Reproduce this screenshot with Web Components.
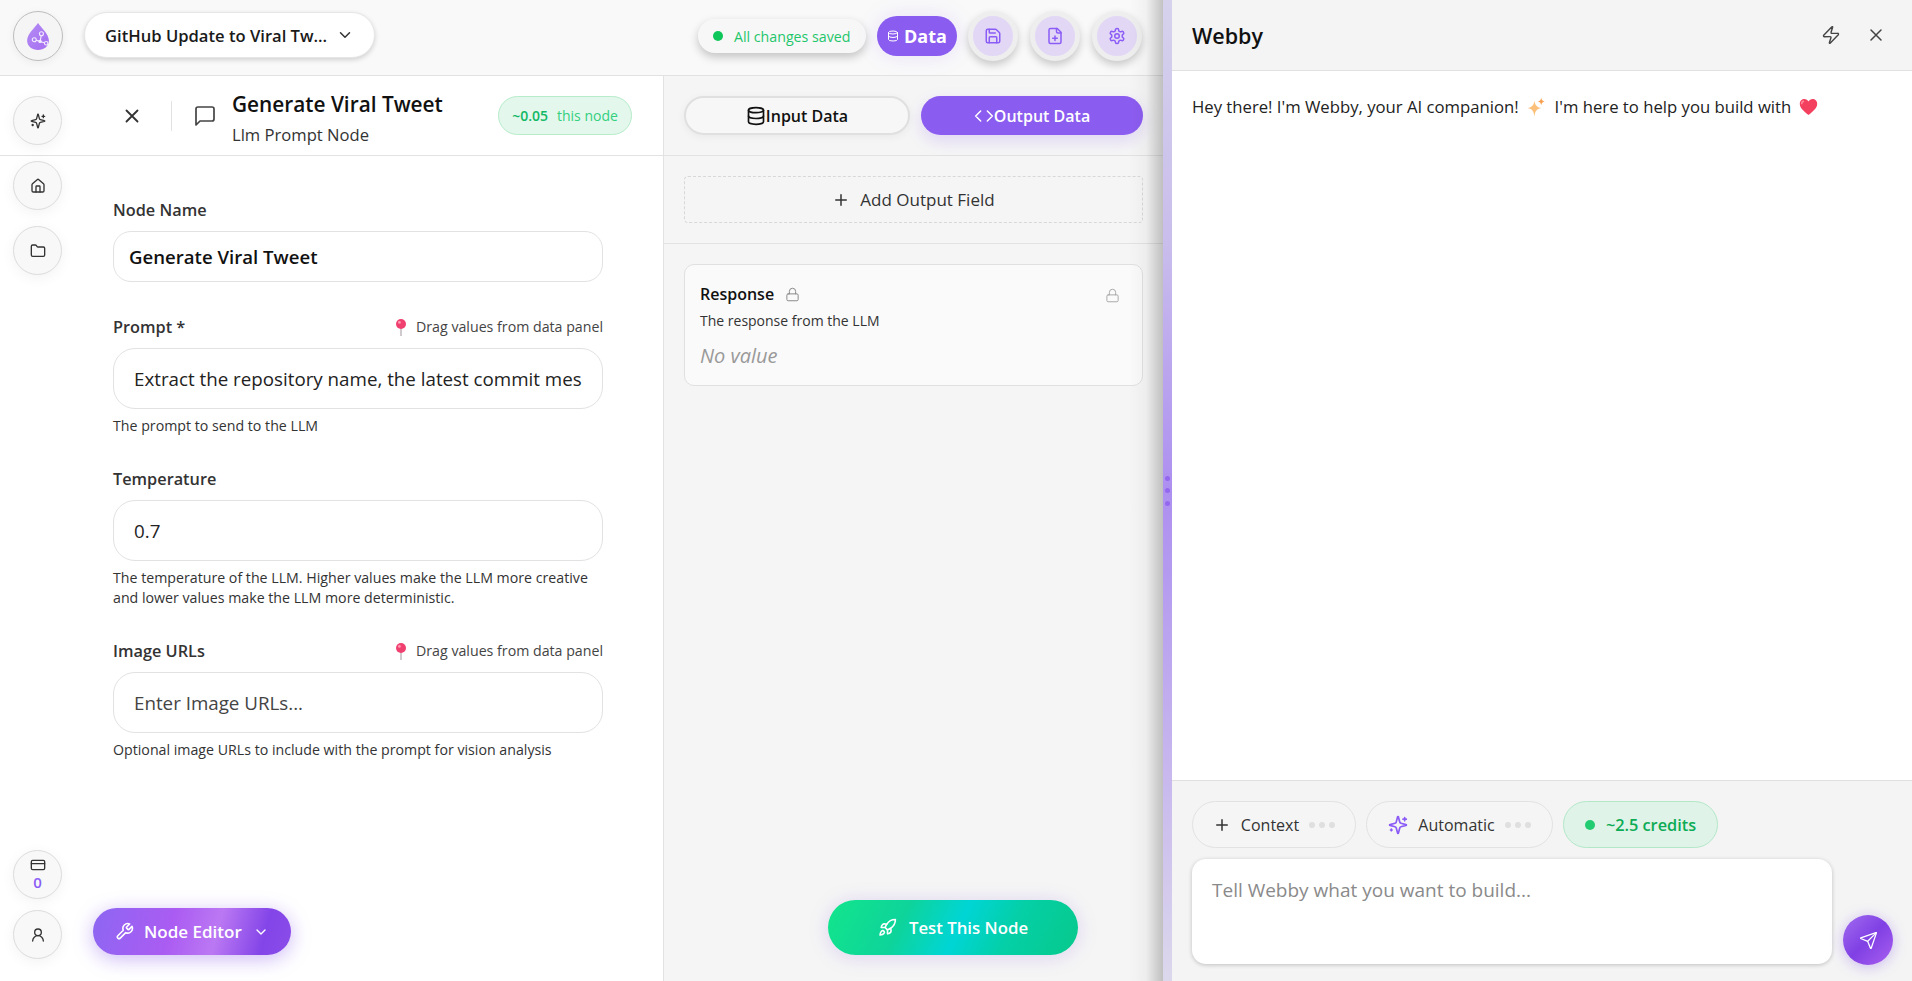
<!doctype html>
<html>
<head>
<meta charset="utf-8">
<title>Webby</title>
<style>
html, body { margin: 0; height: 100%; overflow: hidden; }
body { font-family: "Open Sans", "Liberation Sans", sans-serif; color: #111; background: #fff; }
</style>
</head>
<body>
<app-shell></app-shell>
<script>
// lucide style icons, stroke only
const icons = {
  chevron: '<path d="m6 9 6 6 6-6"/>',
  x: '<path d="M18 6 6 18M6 6l12 12"/>',
  plus: '<path d="M5 12h14M12 5v14"/>',
  msg: '<path d="M21 15a2 2 0 0 1-2 2H7l-4 4V5a2 2 0 0 1 2-2h14a2 2 0 0 1 2 2z"/>',
  db: '<ellipse cx="12" cy="5" rx="9" ry="3"/><path d="M3 5v14a9 3 0 0 0 18 0V5"/><path d="M3 12a9 3 0 0 0 18 0"/>',
  code: '<path d="m8 6-6 6 6 6M16 6l6 6-6 6"/>',
  save: '<path d="M15.2 3a2 2 0 0 1 1.4.6l3.8 3.8a2 2 0 0 1 .6 1.4V19a2 2 0 0 1-2 2H5a2 2 0 0 1-2-2V5a2 2 0 0 1 2-2z"/><path d="M17 21v-7a1 1 0 0 0-1-1H8a1 1 0 0 0-1 1v7"/><path d="M7 3v4a1 1 0 0 0 1 1h7"/>',
  file: '<path d="M15 2H6a2 2 0 0 0-2 2v16a2 2 0 0 0 2 2h12a2 2 0 0 0 2-2V7z"/><path d="M14 2v4a2 2 0 0 0 2 2h4"/><path d="M9 15h6M12 18v-6"/>',
  gear: '<path d="M12.22 2h-.44a2 2 0 0 0-2 2v.18a2 2 0 0 1-1 1.73l-.43.25a2 2 0 0 1-2 0l-.15-.08a2 2 0 0 0-2.73.73l-.22.38a2 2 0 0 0 .73 2.73l.15.1a2 2 0 0 1 1 1.72v.51a2 2 0 0 1-1 1.74l-.15.09a2 2 0 0 0-.73 2.73l.22.38a2 2 0 0 0 2.73.73l.15-.08a2 2 0 0 1 2 0l.43.25a2 2 0 0 1 1 1.73V20a2 2 0 0 0 2 2h.44a2 2 0 0 0 2-2v-.18a2 2 0 0 1 1-1.73l.43-.25a2 2 0 0 1 2 0l.15.08a2 2 0 0 0 2.73-.73l.22-.39a2 2 0 0 0-.73-2.73l-.15-.08a2 2 0 0 1-1-1.74v-.5a2 2 0 0 1 1-1.74l.15-.09a2 2 0 0 0 .73-2.73l-.22-.38a2 2 0 0 0-2.73-.73l-.15.08a2 2 0 0 1-2 0l-.43-.25a2 2 0 0 1-1-1.73V4a2 2 0 0 0-2-2z"/><circle cx="12" cy="12" r="3"/>',
  sparkles: '<path d="M9.9 15.5A2 2 0 0 0 8.5 14.1L2.4 12.5a.5.5 0 0 1 0-1l6.1-1.6A2 2 0 0 0 9.9 8.5l1.6-6.1a.5.5 0 0 1 1 0l1.6 6.1a2 2 0 0 0 1.4 1.4l6.1 1.6a.5.5 0 0 1 0 1l-6.1 1.6a2 2 0 0 0-1.4 1.4l-1.6 6.1a.5.5 0 0 1-1 0z"/><path d="M20 3v4M22 5h-4M4 17v2M5 18H3"/>',
  home: '<path d="M15 21v-8a1 1 0 0 0-1-1h-4a1 1 0 0 0-1 1v8"/><path d="M3 10a2 2 0 0 1 .7-1.5l7-6a2 2 0 0 1 2.6 0l7 6a2 2 0 0 1 .7 1.5v9a2 2 0 0 1-2 2H5a2 2 0 0 1-2-2z"/>',
  folder: '<path d="M20 20a2 2 0 0 0 2-2V8a2 2 0 0 0-2-2h-7.9a2 2 0 0 1-1.7-.9l-.8-1.2A2 2 0 0 0 7.9 3H4a2 2 0 0 0-2 2v13a2 2 0 0 0 2 2z"/>',
  card: '<rect width="20" height="14" x="2" y="5" rx="2"/><path d="M2 10h20"/>',
  user: '<circle cx="12" cy="8" r="5"/><path d="M20 21a8 8 0 0 0-16 0"/>',
  wrench: '<path d="M14.7 6.3a1 1 0 0 0 0 1.4l1.6 1.6a1 1 0 0 0 1.4 0l3.77-3.77a6 6 0 0 1-7.94 7.94l-6.91 6.91a2.12 2.12 0 0 1-3-3l6.91-6.91a6 6 0 0 1 7.94-7.94l-3.76 3.76z"/>',
  rocket: '<path d="M4.5 16.5c-1.5 1.26-2 5-2 5s3.74-.5 5-2c.71-.84.7-2.13-.09-2.91a2.18 2.18 0 0 0-2.91-.09z"/><path d="m12 15-3-3a22 22 0 0 1 2-3.95A12.88 12.88 0 0 1 22 2c0 2.72-.78 7.5-6 11a22.35 22.35 0 0 1-4 2z"/><path d="M9 12H4s.55-3.03 2-4c1.62-1.08 5 0 5 0M12 15v5s3.03-.55 4-2c1.08-1.62 0-5 0-5"/>',
  lock: '<rect width="18" height="11" x="3" y="11" rx="2"/><path d="M7 11V7a5 5 0 0 1 10 0v4"/>',
  bolt: '<path d="M4 14a1 1 0 0 1-.78-1.63l9.9-10.2a.5.5 0 0 1 .86.46l-1.92 6.02A1 1 0 0 0 13 10h7a1 1 0 0 1 .78 1.63l-9.9 10.2a.5.5 0 0 1-.86-.46l1.92-6.02A1 1 0 0 0 11 14z"/>',
  send: '<path d="M14.5 21.7a.5.5 0 0 0 .9 0l6.5-19a.5.5 0 0 0-.6-.6l-19 6.5a.5.5 0 0 0 0 .9l7.9 3.2a2 2 0 0 1 1.1 1.1z"/><path d="m21.9 2.1-10.9 10.9"/>',
}
const icon = (name, size = 18, sw = 2) =>
  `<svg width="${size}" height="${size}" viewBox="0 0 24 24" fill="none" stroke="currentColor" stroke-width="${sw}" stroke-linecap="round" stroke-linejoin="round" style="flex:none;display:block">${icons[name]}</svg>`

const pin = `<svg width="14" height="18" viewBox="0 0 14 18" style="flex:none;display:block"><rect x="6.3" y="9" width="1.4" height="9" fill="#b9b4b8"/><circle cx="7" cy="6" r="5" fill="#f0406f"/><circle cx="5.4" cy="4.4" r="1.4" fill="#ff9ab4"/></svg>`
const sparkle = `<svg width="20" height="21" viewBox="0 0 18 20" style="display:block;margin-right:2px"><path d="M7.500 3.500c.8 4.500 2.200 6 6.500 7-4.300 1-5.700 2.500-6.500 8-.8-5.500-2.200-7-6.500-8 4.300-1 5.700-2.500 6.500-7z" fill="#fbc07a"/><path d="M14 .8c.4 2.200 1.100 3 3.200 3.500-2.100.5-2.800 1.300-3.200 3.500-.4-2.200-1.100-3-3.200-3.500 2.100-.5 2.800-1.300 3.200-3.500z" fill="#f9a050"/></svg>`
const heart = `<svg width="19" height="18" viewBox="0 0 19 18" style="display:block;margin-left:1px"><path d="M9.500 17C3 12 .8 9.200.8 5.800.8 3 3 1 5.400 1c1.800 0 3.200.9 4.100 2.500C10.400 1.900 11.800 1 13.600 1c2.400 0 4.600 2 4.600 4.800C18.200 9.200 16 12 9.500 17z" fill="#f4405f"/><path d="M5 3c-1.500.4-2.400 1.600-2.400 3.200" stroke="#ff8a9c" stroke-width="1.400" fill="none"/></svg>`

class Comp extends HTMLElement {
  connectedCallback() {
    if (this.shadowRoot) return
    this.attachShadow({ mode: "open" }).innerHTML = this.render()
  }
  attr(n, d = "") {
    return this.hasAttribute(n) ? this.getAttribute(n) : d
  }
}

class RoundBtn extends Comp {
  render() {
    return `<style>
:host { display: flex; width: 49px; height: 49px; border-radius: 50%; border: 1px solid #dcdcdc; box-sizing: border-box; background: #f8f8f8; color: #333; align-items: center; justify-content: center; flex-direction: column; box-shadow: 0 3px 14px rgba(0,0,0,.05); }
b { font-size: 15px; font-weight: 600; color: #8b5cf6; line-height: 19px; }
</style>${icon(this.attr("icon"), +this.attr("size", 16))}${this.hasAttribute("count") ? `<b>${this.attr("count")}</b>` : ""}`
  }
}

class ActionBtn extends Comp {
  render() {
    return `<style>
:host { display: flex; width: 50px; height: 50px; box-sizing: border-box; border-radius: 50%; border: 5px solid #eeeeee; background: #e2d8f6; color: #8b5cf6; align-items: center; justify-content: center; box-shadow: 0 4px 8px rgba(0,0,0,.2); }
</style>${icon(this.attr("icon"), 18)}`
  }
}

class TopBar extends Comp {
  render() {
    return `<style>
:host { display: flex; align-items: center; height: 72px; box-sizing: content-box; border-bottom: 1px solid #e2e2e2; background: #f9f9f9; padding: 0 21px 3px 13px; }
.logo { width: 50px; height: 50px; box-sizing: border-box; border: 1px solid #bdbdbd; border-radius: 50%; background: #f5f5f5; display: flex; align-items: center; justify-content: center; box-shadow: 0 2px 8px rgba(0,0,0,.06); }
.proj { margin: -2px 0 0 21px; width: 291px; height: 46px; box-sizing: border-box; border-radius: 23px; background: #fff; border: 1px solid #e6e6e6; box-shadow: 0 2px 5px rgba(0,0,0,.16); display: flex; align-items: center; padding: 0 20px 0 20px; justify-content: space-between; font-size: 16.6px; font-weight: 600; color: #1a1a1a; white-space: nowrap; }
.proj svg { color: #333; }
.right { margin-left: auto; display: flex; align-items: center; gap: 11px; }
.saved { width: 168px; height: 34px; border-radius: 17px; background: #f7f7f7; box-shadow: 0 4px 10px rgba(0,0,0,.22); display: flex; align-items: center; box-sizing: border-box; padding-left: 15px; gap: 11px; font-size: 14.2px; color: #1fc66b; white-space: nowrap; }
.saved i { width: 10px; height: 10px; border-radius: 50%; background: #0ec65a; }
.data { width: 80px; height: 40px; border-radius: 20px; background: #8b5cf0; color: #fff; display: flex; align-items: center; justify-content: center; gap: 5px; font-size: 18px; font-weight: 700; box-shadow: 0 0 22px rgba(139,92,246,.15); }
</style>
<div class="logo"><svg width="24" height="29" viewBox="0 0 26 32"><defs><linearGradient id="g" x1="0" y1="0" x2="1" y2="1"><stop offset="0" stop-color="#b48cf5"/><stop offset="1" stop-color="#a56ef0"/></linearGradient></defs><path d="M13 1C9 7 1 13 1 20.500 1 27 6.500 31 13 31s12-4 12-10.500C25 13 17 7 13 1z" fill="url(#g)"/><g stroke="#f3ecff" stroke-width="1.200" fill="none"><path d="M10.900 20.100 15.300 21.400 16.500 15.400M15.300 21.400 20 23"/><circle cx="8.900" cy="19.600" r="2.200"/><circle cx="16.800" cy="13" r="2.200"/><circle cx="22" cy="23.500" r="1.900"/><circle cx="15.300" cy="21.400" r="1.300" fill="#f3ecff"/></g></svg></div>
<div class="proj"><span>GitHub Update to Viral Tw...</span>${icon("chevron", 18)}</div>
<div class="right">
  <div class="saved"><i></i><span>All changes saved</span></div>
  <div class="data">${icon("db", 12)}<span>Data</span></div>
  <action-btn icon="save"></action-btn>
  <action-btn icon="file" style="margin-left:1px"></action-btn>
  <action-btn icon="gear" style="margin-left:1px"></action-btn>
</div>`
  }
}

class SideRail extends Comp {
  render() {
    return `<style>
:host { display: flex; flex-direction: column; justify-content: space-between; width: 75px; flex: none; box-sizing: border-box; padding: 20px 0 22px 13px; }
div { display: flex; flex-direction: column; }
.top { gap: 16px; }
.bot { gap: 11px; }
</style>
<div class="top"><round-btn icon="sparkles"></round-btn><round-btn icon="home"></round-btn><round-btn icon="folder"></round-btn></div>
<div class="bot"><round-btn icon="card" count="0"></round-btn><round-btn icon="user"></round-btn></div>`
  }
}

class NodeHeader extends Comp {
  render() {
    return `<style>
:host { display: flex; align-items: center; height: 79px; border-bottom: 1px solid #e2e2e2; box-sizing: content-box; padding-left: 121px; }
.sep { width: 1px; height: 30px; background: #e2e2e2; margin: 0 21px 0 28px; }
.msg { color: #444; margin-right: 15px; }
.txt { padding-top: 5px; }
.t { font-size: 20.8px; font-weight: 600; line-height: 27px; color: #111; white-space: nowrap; }
.s { font-size: 16.6px; line-height: 22px; margin-top: 6px; color: #333; white-space: nowrap; }
.cost { margin-left: auto; margin-right: 31px; width: 134px; height: 39px; box-sizing: border-box; border-radius: 20px; border: 1px solid #b6ecca; background: #e3f7ec; display: flex; align-items: center; justify-content: center; gap: 9px; font-size: 14px; color: #32d07f; white-space: nowrap; }
.cost b { color: #11b864; font-weight: 600; }
</style>
<span style="color:#333">${icon("x", 22)}</span><div class="sep"></div>
<span class="msg">${icon("msg", 24, 1.7)}</span>
<div class="txt"><div class="t">Generate Viral Tweet</div><div class="s">Llm Prompt Node</div></div>
<div class="cost"><b>~0.05</b><span>this node</span></div>`
  }
}

class FormField extends Comp {
  render() {
    const drag = this.hasAttribute("drag")
      ? `<span class="drag">${pin}<span>Drag values from data panel</span></span>`
      : ""
    const hint = this.attr("hint")
    return `<style>
:host { display: block; margin-bottom: 29px; }
.l { display: flex; justify-content: space-between; align-items: center; height: 27px; margin-bottom: 8px; }
.n { font-size: 16.3px; font-weight: 600; color: #333; }
.drag { display: flex; align-items: center; gap: 8px; font-size: 14.2px; color: #444; }
.box { height: 61px; box-sizing: border-box; border: 1px solid #e2e2e2; border-radius: 22px; display: flex; align-items: center; padding: 0 0 0 20px; font-size: 18.75px; white-space: nowrap; overflow: hidden; color: #222; background: #fff; }
.box.bold { font-weight: 600; padding-left: 15px; color: #111; height: 51px; border-radius: 18px; font-size: 18.6px; }
.box.ph { color: #444; }
.h { font-size: 14.2px; line-height: 20px; color: #333; margin-top: 7px; }
</style>
<div class="l"><span class="n">${this.attr("label")}</span>${drag}</div>
<div class="box ${this.attr("kind")}"><slot></slot></div>
${hint ? `<div class="h">${hint}</div>` : ""}`
  }
}

class NodeEditor extends Comp {
  render() {
    return `<style>
:host { display: flex; flex-direction: column; flex: none; width: 664px; box-sizing: border-box; border-right: 1px solid #e2e2e2; background: #fff; position: relative; min-height: 0; }
.form { width: 490px; margin-left: 113px; padding-top: 40px; }
.fab { position: absolute; left: 93px; top: 832px; width: 198px; height: 47px; border-radius: 24px; background: linear-gradient(105deg, #8d66f2 0%, #ab5cf2 40%, #bb78f3 62%, #8345e8 85%, #8a4ce8 100%); color: #fff; display: flex; align-items: center; gap: 10px; box-sizing: border-box; padding-left: 22px; font-size: 17px; font-weight: 600; box-shadow: 0 4px 20px rgba(130,80,235,.4); white-space: nowrap; }
.fab .c { margin-left: 1px; }
</style>
<node-header></node-header>
<div class="form"><slot></slot></div>
<div class="fab">${icon("wrench", 19)}<span>Node Editor</span><span class="c">${icon("chevron", 16)}</span></div>`
  }
}

class TabBtn extends Comp {
  render() {
    const on = this.hasAttribute("on")
    return `<style>
:host { display: flex; flex: 1; height: 39px; box-sizing: border-box; border-radius: 20px; align-items: center; justify-content: center; font-size: 16px; font-weight: 600; white-space: nowrap;
  ${on ? "background:#8b5cf0;color:#fff;box-shadow:0 6px 16px rgba(139,92,246,.2);" : "background:#f7f7f7;color:#111;border:2px solid #e0e0e0;box-shadow:0 2px 8px rgba(0,0,0,.05);"} }
</style>${icon(this.attr("icon"), 20, on ? 1.8 : 2)}<span><slot></slot></span>`
  }
}

class OutputCard extends Comp {
  render() {
    return `<style>
:host { display: block; position: relative; height: 122px; box-sizing: border-box; border: 1px solid #e0e0e0; border-radius: 10px; background: #fafafa; padding: 18px 15px; }
.n { display: flex; align-items: center; gap: 11px; font-size: 16px; font-weight: 600; line-height: 22px; color: #111; }
.n span { color: #8a8a8a; }
.d { font-size: 14px; line-height: 19px; margin-top: 6px; color: #333; }
.v { font-size: 20px; font-style: italic; color: #999; margin-top: 13px; line-height: 25px; }
.corner { position: absolute; right: 22px; top: 23px; color: #aaa; }
</style>
<div class="n">Response <span>${icon("lock", 15, 1.6)}</span></div>
<div class="d">The response from the LLM</div>
<div class="v">No value</div>
<span class="corner">${icon("lock", 15, 1.6)}</span>`
  }
}

class DataPanel extends Comp {
  render() {
    return `<style>
:host { display: flex; flex-direction: column; flex: 1; min-width: 0; background: #f5f5f5; position: relative; overflow: hidden; }
.tabs { display: flex; gap: 11px; height: 79px; align-items: center; padding: 0 20px; border-bottom: 1px solid #e2e2e2; }
.add { padding: 20px; border-bottom: 1px solid #e2e2e2; }
.dash { height: 47px; box-sizing: border-box; border: 1px dashed #d8d8d8; border-radius: 4px; display: flex; align-items: center; justify-content: center; gap: 10px; font-size: 17px; color: #333; }
.cards { padding: 20px 20px 0; }
.test { position: absolute; left: 164px; top: 824px; width: 250px; height: 55px; border-radius: 28px; background: linear-gradient(115deg, #12e58c 0%, #0ed49a 30%, #00d5d5 52%, #04cfa6 72%, #07c98b 100%); color: #fff; display: flex; align-items: center; justify-content: center; gap: 12px; font-size: 16.8px; font-weight: 600; box-shadow: 0 2px 20px rgba(130,90,230,.22); white-space: nowrap; }
</style>
<div class="tabs"><tab-btn icon="db">Input Data</tab-btn><tab-btn icon="code" on>Output Data</tab-btn></div>
<div class="add"><div class="dash">${icon("plus", 18)}<span>Add Output Field</span></div></div>
<div class="cards"><output-card></output-card></div>
<div class="test">${icon("rocket", 19)}<span>Test This Node</span></div>`
  }
}

class ChatChip extends Comp {
  render() {
    const green = this.hasAttribute("green")
    const dots = green ? "" : `<span class="dots"><i></i><i></i><i></i></span>`
    const lead = green ? `<b class="dot"></b>` : `<span class="ic">${icon(this.attr("icon"), +this.attr("size", 18))}</span>`
    return `<style>
:host { display: flex; height: 47px; box-sizing: border-box; border-radius: 24px; align-items: center; justify-content: center; gap: 10px; font-size: 16px; white-space: nowrap; border: 1px solid ${green ? "#b2e8c8" : "#e2e2e2"}; background: ${green ? "#e0f3e8" : "#f5f5f5"}; color: ${green ? "#0cab55" : "#333"}; font-weight: ${green ? 600 : 400}; }
:host([green]) { font-size: 16.3px; }
.ic { color: ${this.attr("tint", "#333")}; }
.dot { width: 10px; height: 10px; border-radius: 50%; background: #22cc70; margin-right: 1px; }
.dots { display: flex; gap: 4px; }
.dots i { width: 6px; height: 6px; border-radius: 50%; background: #dfdfdf; }
</style>${lead}<span><slot></slot></span>${dots}`
  }
}

class ChatPanel extends Comp {
  render() {
    return `<style>
:host { display: flex; flex-direction: column; width: 740px; flex: none; background: #fff; color: #222; }
header { height: 71px; box-sizing: border-box; display: flex; align-items: center; padding: 0 26px 0 20px; background: #f4f4f4; border-bottom: 1px solid #e0e0e0; font-size: 21.5px; font-weight: 600; color: #111; gap: 25px; flex: none; }
header .sp { flex: 1; }
header svg { color: #444; }
.msgs { flex: 1; padding: 25px 20px; font-size: 16.7px; line-height: 22px; display: flex; align-items: center; align-content: flex-start; flex-wrap: wrap; gap: 7px; color: #222; }
footer { flex: none; height: 201px; box-sizing: border-box; background: #f4f4f4; border-top: 1px solid #e0e0e0; padding: 20px 19px 0 20px; }
.chips { display: flex; gap: 10px; }
.inp { display: flex; margin-top: 11px; align-items: flex-end; gap: 11px; }
.ta { width: 640px; height: 105px; box-sizing: border-box; background: #fff; border-radius: 14px; box-shadow: 0 1px 4px rgba(0,0,0,.22); padding: 18px 20px; font-size: 19px; color: #8a8a8a; }
.send { width: 50px; height: 50px; border-radius: 50%; background: linear-gradient(135deg, #a26cf0, #8040e4 50%, #aa60f0); color: #fff; display: flex; align-items: center; justify-content: center; box-shadow: 0 2px 14px rgba(130,80,235,.35); flex: none; margin-bottom: -1px; }
</style>
<header><span>Webby</span><span class="sp"></span>${icon("bolt", 20, 1.7)}${icon("x", 20, 1.8)}</header>
<div class="msgs"><span>Hey there! I'm Webby, your AI companion!</span>${sparkle}<span>I'm here to help you build with</span>${heart}</div>
<footer>
  <div class="chips">
    <chat-chip icon="plus" style="width:164px">Context</chat-chip>
    <chat-chip icon="sparkles" size="20" tint="#8b5cf6" style="width:187px">Automatic</chat-chip>
    <chat-chip green style="width:155px">~2.5 credits</chat-chip>
  </div>
  <div class="inp"><div class="ta">Tell Webby what you want to build...</div><div class="send">${icon("send", 19, 1.6)}</div></div>
</footer>`
  }
}

class AppShell extends Comp {
  render() {
    return `<style>
:host { display: flex; height: 100vh; overflow: hidden; }
.main { width: 1163px; flex: none; display: flex; flex-direction: column; min-height: 0; position: relative; }
.main::after { content: ""; position: absolute; right: 0; top: 0; bottom: 0; width: 34px; background: linear-gradient(90deg, rgba(0,0,0,0), rgba(0,0,0,.03) 50%, rgba(0,0,0,.22)); pointer-events: none; }
.cols { flex: 1; display: flex; min-height: 0; }
.split { width: 9px; flex: none; position: relative; background: linear-gradient(180deg, #d6d2ec 0%, #c9bdec 25%, #ad8ff0 50%, #c4b2ee 75%, #dcd8ec 100%); }
.split span { position: absolute; left: 2px; width: 5px; height: 5px; border-radius: 50%; background: #9468ee; }
.rail { position: absolute; left: 0; top: 76px; bottom: 0; }
</style>
<div class="main">
  <top-bar></top-bar>
  <div class="cols">
    <node-editor>
      <form-field label="Node Name" kind="bold" style="margin-bottom:31px">Generate Viral Tweet</form-field>
      <form-field label="Prompt *" drag hint="The prompt to send to the LLM">Extract the repository name, the latest commit mes</form-field>
      <form-field label="Temperature" hint="The temperature of the LLM. Higher values make the LLM more creative<br>and lower values make the LLM more deterministic.">0.7</form-field>
      <form-field label="Image URLs" drag kind="ph" hint="Optional image URLs to include with the prompt for vision analysis">Enter Image URLs...</form-field>
    </node-editor>
    <data-panel></data-panel>
  </div>
  <side-rail class="rail"></side-rail>
</div>
<div class="split"><span style="top:476px"></span><span style="top:488px"></span><span style="top:501px"></span></div>
<chat-panel></chat-panel>`
  }
}

customElements.define("round-btn", RoundBtn)
customElements.define("action-btn", ActionBtn)
customElements.define("top-bar", TopBar)
customElements.define("side-rail", SideRail)
customElements.define("node-header", NodeHeader)
customElements.define("form-field", FormField)
customElements.define("node-editor", NodeEditor)
customElements.define("tab-btn", TabBtn)
customElements.define("output-card", OutputCard)
customElements.define("data-panel", DataPanel)
customElements.define("chat-chip", ChatChip)
customElements.define("chat-panel", ChatPanel)
customElements.define("app-shell", AppShell)
</script>
</body>
</html>
